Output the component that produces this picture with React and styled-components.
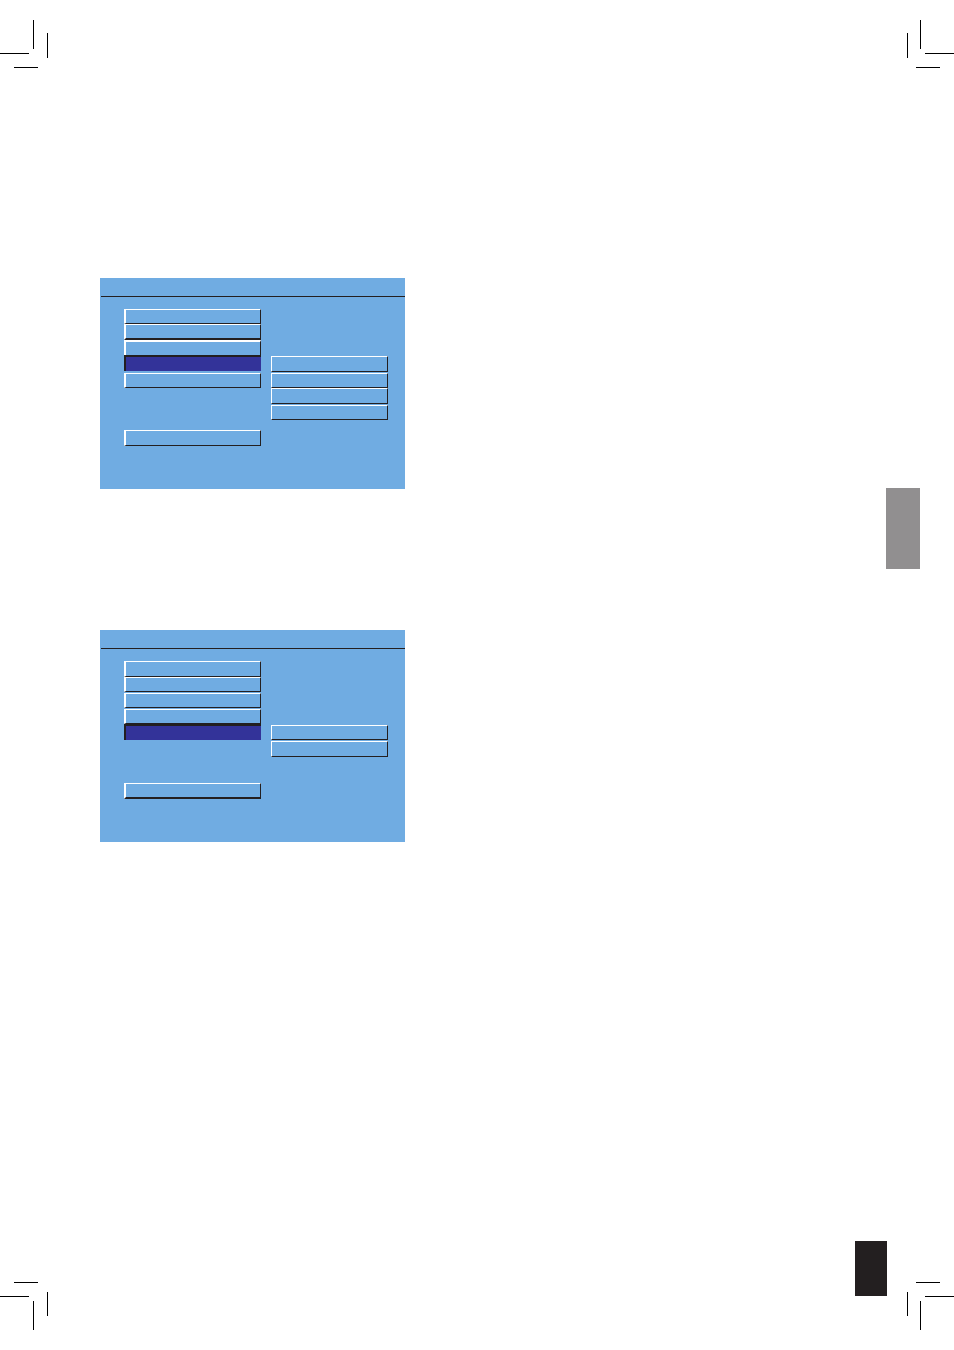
import React from "react";
import styled, { createGlobalStyle } from "styled-components";

const ink = "#231f20";
const sky = "#70ace2";
const navy = "#333399";

const GlobalStyle = createGlobalStyle`
  *, *::before, *::after { box-sizing: border-box; }
  body { margin: 0; background: #fff; font-family: "Liberation Sans", sans-serif; }
`;

const Page = styled.div`
  min-height: 100vh;
  display: flex;
  flex-direction: column;
`;

const PageTop = styled.header`
  display: flex;
  justify-content: space-between;
`;

const PageBottom = styled.footer`
  display: flex;
  align-items: flex-end;
`;

const Marks = styled.svg`
  display: block;
  flex: none;
  shape-rendering: crispEdges;
`;

const Content = styled.main`
  flex: 1;
  display: flex;
  justify-content: space-between;
  padding: 210px 34px 0 100px;
`;

const Figures = styled.div`
  display: flex;
  flex-direction: column;
  gap: 141px;
`;

const Screen = styled.section`
  background: ${sky};
  padding-bottom: 43px;
`;

const TitleBar = styled.div`
  height: 19px;
  margin-left: 1px;
  border-bottom: 1px solid ${ink};
`;

const Menus = styled.div`
  display: flex;
  align-items: flex-start;
  gap: 10px;
  padding: 12px 17px 0 24px;
`;

const MenuList = styled.nav`
  display: flex;
  flex-direction: column;
  width: ${(p) => (p.$sub ? 117 : 137)}px;
  margin-top: ${(p) => p.$drop || 0}px;
`;

const MenuButton = styled.button`
  display: block;
  width: 100%;
  height: ${(p) => p.$height}px;
  margin: ${(p) => p.$gap || 0}px 0 0;
  padding: 0;
  border-style: solid;
  border-radius: 0;
  border-color: ${(p) => (p.$active ? ink : `#fff ${ink} ${ink} #fff`)};
  border-width: ${(p) =>
    p.$active
      ? "2px 0 0 2px"
      : `${p.$top ?? 1}px 1px ${p.$bottom ?? 1}px ${p.$left}px`};
  background: ${(p) => (p.$active ? navy : sky)};
`;

const SectionTab = styled.aside`
  width: 34px;
  height: 81px;
  margin-top: 210px;
  background: #918f90;
`;

const Folio = styled.div`
  align-self: flex-start;
  width: 32px;
  height: 55px;
  margin: 0 20px 0 auto;
  background: ${ink};
`;

const BottomMarks = styled.div`
  padding-top: 41px;
`;

const screens = [
  {
    name: "Setup menu, fourth item",
    drop: 47,
    items: [
      { height: 15 },
      { height: 16, bottom: 2 },
      { height: 15, top: 2, bottom: 0 },
      { height: 16, active: true },
      { height: 15, gap: 2 },
      { height: 16, gap: 42 },
    ],
    options: [
      { height: 16 },
      { height: 15, gap: 1 },
      { height: 16 },
      { height: 15, gap: 1 },
    ],
  },
  {
    name: "Setup menu, fifth item",
    drop: 64,
    items: [
      { height: 16 },
      { height: 15 },
      { height: 15, gap: 1 },
      { height: 15, gap: 1 },
      { height: 16, active: true },
      { height: 16, gap: 43, bottom: 2 },
    ],
    options: [{ height: 15 }, { height: 16, gap: 1 }],
  },
];

function Menu({ label, rows, sub, drop }) {
  return (
    <MenuList aria-label={label} $sub={sub} $drop={drop}>
      {rows.map((row, i) => (
        <MenuButton
          key={i}
          type="button"
          aria-label={`${sub ? "Option" : "Item"} ${i + 1}`}
          $height={row.height}
          $gap={row.gap}
          $top={row.top}
          $bottom={row.bottom}
          $left={sub ? 1 : 2}
          $active={row.active}
        />
      ))}
    </MenuList>
  );
}

function CropMarks({ right, bottom }) {
  const path = right
    ? bottom
      ? "M9 0h24v1h-24zM18 14h29v1h-29zM0 10h1v24h-1zM13 19h1v29h-1z"
      : "M13 20h1v29h-1zM0 33h1v25h-1zM18 53h29v1h-29zM9 67h24v1h-24z"
    : bottom
      ? "M14 0h24v1h-24zM0 14h29v1h-29zM47 10h1v24h-1zM33 19h1v29h-1z"
      : "M33 20h1v29h-1zM47 33h1v25h-1zM0 53h29v1h-29zM14 67h24v1h-24z";
  return (
    <Marks width={right ? 47 : 48} height="68" aria-hidden="true">
      <path d={path} fill="#000" />
    </Marks>
  );
}

export default function App() {
  return (
    <Page>
      <GlobalStyle />
      <PageTop>
        <CropMarks />
        <CropMarks right />
      </PageTop>
      <Content>
        <Figures>
          {screens.map((screen) => (
            <Screen key={screen.name} aria-label={screen.name}>
              <TitleBar />
              <Menus>
                <Menu label="Items" rows={screen.items} />
                <Menu label="Options" rows={screen.options} sub drop={screen.drop} />
              </Menus>
            </Screen>
          ))}
        </Figures>
        <SectionTab />
      </Content>
      <PageBottom>
        <CropMarks bottom />
        <Folio />
        <BottomMarks>
          <CropMarks right bottom />
        </BottomMarks>
      </PageBottom>
    </Page>
  );
}
